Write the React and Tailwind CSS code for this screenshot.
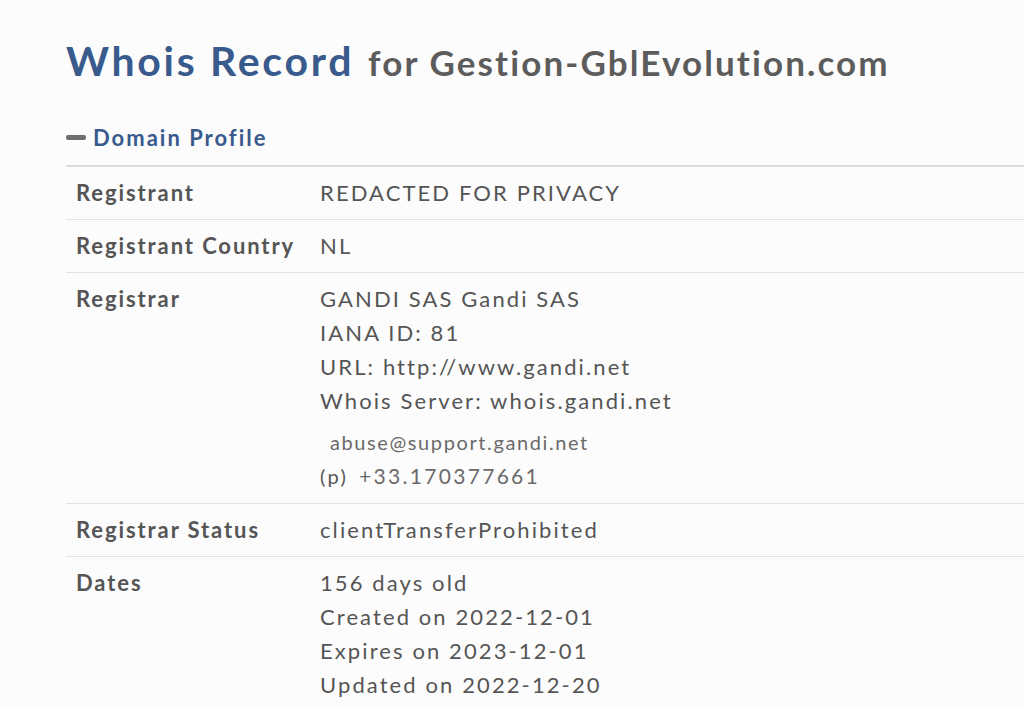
const ROWS = [
  { label: 'Registrant', lines: ['REDACTED FOR PRIVACY'] },
  { label: 'Registrant Country', lines: ['NL'] },
  {
    label: 'Registrar',
    lines: ['GANDI SAS Gandi SAS', 'IANA ID: 81', 'URL: http://www.gandi.net', 'Whois Server: whois.gandi.net'],
    contact: true,
  },
  { label: 'Registrar Status', lines: ['clientTransferProhibited'] },
  {
    label: 'Dates',
    lines: ['156 days old', 'Created on 2022-12-01', 'Expires on 2023-12-01', 'Updated on 2022-12-20'],
  },
]

const App = () => {
  return (
    <div className="min-h-[709px] w-full bg-[#fcfcfc] overflow-hidden" style={{ fontFamily: 'Lato, "Open Sans", sans-serif' }}>
      <div className="pl-[66px] pt-[33px]">
        <h1 className="flex items-baseline gap-[14px] whitespace-nowrap leading-[56px]">
          <span className="text-[41px] font-bold text-[#385a8c] tracking-[2.7px]">Whois Record</span>
          <span className="text-[35px] font-bold text-[#5c5c5c] tracking-[2.1px]">for Gestion-GblEvolution.com</span>
        </h1>

        <div className="mt-[31px] flex items-center gap-[7px] h-[32px]">
          <span className="block w-[20px] h-[5px] rounded-[2px] bg-[#6e6e6e]" />
          <span className="text-[22px] font-bold text-[#385a8c] tracking-[2px]">Domain Profile</span>
        </div>

        <div className="mt-[12px] border-t-2 border-[#dcdcdc]">
          {ROWS.map((row) => (
            <div key={row.label} className="flex border-b border-[#e2e2e2] py-[9px] text-[22px] leading-[34px]">
              <div className="w-[254px] shrink-0 pl-[10px] font-bold text-[#555555] tracking-[1.9px]">{row.label}</div>
              <div className="text-[#555555] tracking-[2.1px]">
                {row.lines.map((l) => (
                  <div key={l}>{l}</div>
                ))}
                {row.contact && (
                  <div className="pt-[6px] pb-[2px] text-[#6a6a6a]">
                    <div className="pl-[10px] text-[20px] leading-[36px] tracking-[1.6px]">abuse@support.gandi.net</div>
                    <div className="flex items-baseline gap-[11px] leading-[32px] tracking-[2.3px]">
                      <span className="text-[20px] text-[#555555]">(p)</span>
                      <span className="text-[21px]">+33.170377661</span>
                    </div>
                  </div>
                )}
              </div>
            </div>
          ))}
        </div>
      </div>
    </div>
  )
}

export default App
